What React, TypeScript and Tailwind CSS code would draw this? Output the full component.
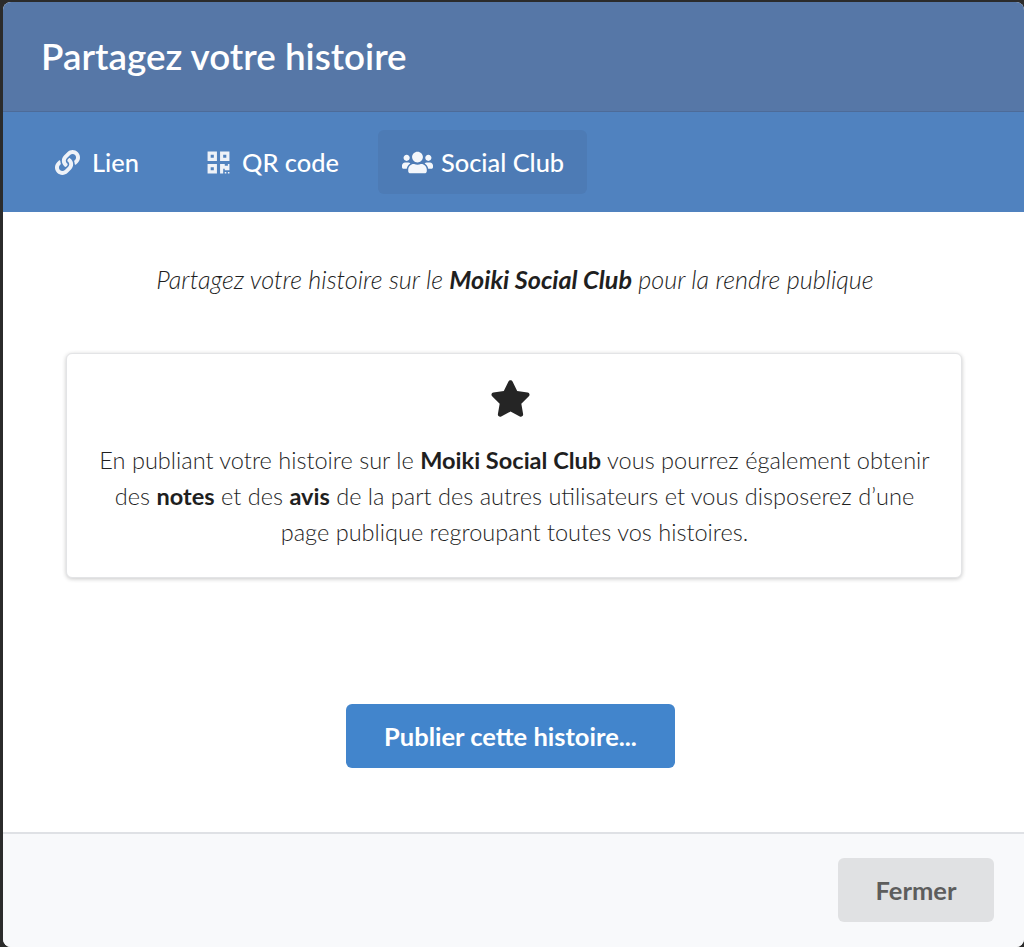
import { FaLink, FaQrcode, FaUsers, FaStar } from "react-icons/fa";

export default function App() {
  return (
    <div className="w-[1024px] h-[947px] bg-[#2b2b2b] pt-[2px] pl-[3px] overflow-hidden font-['Lato',sans-serif]">
      <div className="w-[1021px] h-[945px] flex flex-col rounded-[8px] overflow-hidden bg-white">
        <header className="h-[110px] bg-[#5677a7] border-b border-[#4d6b98] flex items-center pl-[38px] shrink-0">
          <h1 className="text-[36.8px] font-semibold text-white leading-none">Partagez votre histoire</h1>
        </header>
        <nav className="h-[100px] bg-[#5082bf] flex items-start pt-[18px] pl-[29px] shrink-0 text-[25.4px] font-medium text-white">
          <div className="h-[64px] w-[130px] pl-[23px] pt-[1px] flex items-center gap-[12px]">
            <FaLink className="w-[25px] h-[25px] text-[#eef2f8]" />
            <span>Lien</span>
          </div>
          <div className="h-[64px] w-[176px] ml-[22px] pl-[22px] pt-[1px] flex items-center gap-[11px]">
            <FaQrcode className="w-[25px] h-[25px] text-[#eef2f8]" />
            <span>QR code</span>
          </div>
          <div className="h-[64px] w-[209px] ml-[18px] pl-[24px] pt-[1px] flex items-center gap-[8px] rounded-[6px] bg-[#4d7bb5]">
            <FaUsers className="w-[31px] h-[25px] text-[#f4f7fb]" />
            <span>Social Club</span>
          </div>
        </nav>
        <main className="flex-1 flex flex-col items-center">
          <p className="mt-[51px] ml-[3px] text-[25.2px] font-light italic text-[#1f1f1f] leading-[32px]">
            Partagez votre histoire sur le <b className="font-bold">Moiki Social Club</b> pour la rendre publique
          </p>
          <section className="mt-[58px] w-[896px] h-[225px] self-start ml-[63px] rounded-[6px] bg-white border border-[#e3e4e6] shadow-[0_1px_4px_rgba(0,0,0,0.22)] flex flex-col items-center pt-[25px] text-center">
            <FaStar className="w-[41px] h-[39px] mr-[7px] text-[#252525]" />
            <p className="mt-[24px] ml-[1px] text-[23.55px] font-light text-[#1f1f1f] leading-[36px]">
              En publiant votre histoire sur le <b className="font-bold">Moiki Social Club</b> vous pourrez également obtenir
              <br />
              des <b className="font-bold">notes</b> et des <b className="font-bold">avis</b> de la part des autres utilisateurs et vous disposerez d’une
              <br />
              page publique regroupant toutes vos histoires.
            </p>
          </section>
          <button className="mt-[126px] mr-[6px] w-[329px] h-[64px] rounded-[6px] bg-[#4285cc] text-white text-[25.5px] font-bold">
            Publier cette histoire...
          </button>
        </main>
        <footer className="h-[115px] shrink-0 bg-[#f8f9fb] border-t-2 border-[#dfe1e5] flex justify-end pt-[24px] pr-[30px]">
          <button className="w-[156px] h-[64px] rounded-[6px] bg-[#e0e1e3] text-[#5d5d5d] text-[25.5px] font-bold">Fermer</button>
        </footer>
      </div>
    </div>
  );
}
